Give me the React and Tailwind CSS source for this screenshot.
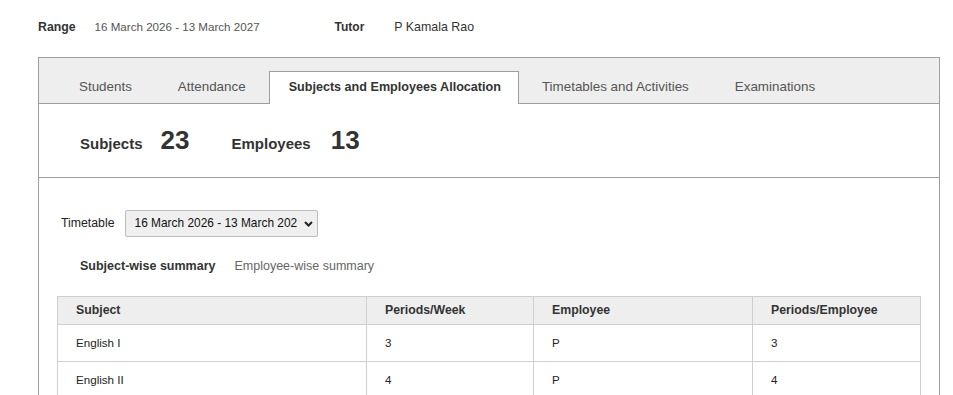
const tabs = [
  'Students',
  'Attendance',
  'Subjects and Employees Allocation',
  'Timetables and Activities',
  'Examinations',
];

const rows = [
  { subject: 'English I', periods: 3, employee: 'P', perEmployee: 3 },
  { subject: 'English II', periods: 4, employee: 'P', perEmployee: 4 },
];

function App() {
  const active = 2;

  return (
    <div className="min-h-screen bg-white pl-[38px] pt-[18px] [font-family:'Liberation_Sans',Arial,sans-serif] text-[#333]">
      <div className="flex items-center h-[18px]">
        <span className="text-[12.3px] font-bold text-[#333]">Range</span>
        <span className="ml-[19px] text-[11.6px] text-[#555]">16 March 2026 - 13 March 2027</span>
        <span className="ml-[75px] text-[12px] font-bold text-[#333]">Tutor</span>
        <span className="ml-[30px] text-[12.4px] text-[#333]">P Kamala Rao</span>
      </div>

      <div className="mt-[21px] w-[902px] border border-[#9e9e9e]">
        <div className="flex items-end bg-[#eee] pt-[13px] pl-[17px] border-b border-[#9e9e9e]">
          {tabs.map((tab, i) => (
            <div
              key={tab}
              className={`h-[33px] -mb-px pb-[2px] flex items-center border-t border-l border-r ${
                i === active
                  ? 'bg-white border-[#9e9e9e] font-bold text-[12.6px] text-[#333] pl-[19px] pr-[17px]'
                  : 'border-transparent text-[13.4px] text-[#555] px-[22px]'
              }`}
            >
              {tab}
            </div>
          ))}
        </div>

        <div className="h-[74px] flex items-center pl-[41px] border-b border-[#9e9e9e]">
          <div className="flex items-baseline">
            <span className="text-[15px] font-bold text-[#333]">Subjects</span>
            <span className="ml-[18px] text-[26px] font-bold text-[#333]">23</span>
            <span className="ml-[42px] text-[15px] font-bold text-[#333]">Employees</span>
            <span className="ml-[20px] text-[26px] font-bold text-[#333]">13</span>
          </div>
        </div>

        <div className="pt-[32px] pb-6">
          <div className="flex items-center pl-[22px]">
            <span className="text-[12.3px] text-[#222]">Timetable</span>
            <div className="ml-[10px] w-[193px] h-[27px] flex items-center bg-[#efefef] border border-[#bdbdbd] rounded-[2px] pl-[9px]">
              <span className="w-[164px] overflow-hidden whitespace-nowrap text-[11.9px] text-[#111]">
                16 March 2026 - 13 March 202
              </span>
              <svg width="9" height="6" viewBox="0 0 9 6" className="ml-[5px] shrink-0">
                <polyline points="1,1 4.5,4.5 8,1" fill="none" stroke="#222" strokeWidth="2" />
              </svg>
            </div>
          </div>

          <div className="flex items-center pl-[41px] mt-[21px] h-[16px]">
            <span className="text-[12.5px] font-bold text-[#333]">Subject-wise summary</span>
            <span className="ml-[19px] text-[12.5px] text-[#666]">Employee-wise summary</span>
          </div>

          <table className="ml-[18px] mt-[22px] border-collapse table-fixed w-[863px]">
            <colgroup>
              <col className="w-[309px]" />
              <col className="w-[167px]" />
              <col className="w-[219px]" />
              <col className="w-[168px]" />
            </colgroup>
            <thead>
              <tr className="bg-[#eee]">
                {['Subject', 'Periods/Week', 'Employee', 'Periods/Employee'].map((h) => (
                  <th
                    key={h}
                    className="h-[28px] border border-[#cfcfcf] text-left pl-[18px] text-[12.3px] font-bold text-[#333]"
                  >
                    {h}
                  </th>
                ))}
              </tr>
            </thead>
            <tbody>
              {rows.map((r) => (
                <tr key={r.subject}>
                  <td className="h-[37px] border border-[#cfcfcf] pl-[18px] text-[11.6px] text-[#222]">{r.subject}</td>
                  <td className="border border-[#cfcfcf] pl-[18px] text-[11.6px] text-[#222]">{r.periods}</td>
                  <td className="border border-[#cfcfcf] pl-[18px] text-[11.6px] text-[#222]">{r.employee}</td>
                  <td className="border border-[#cfcfcf] pl-[18px] text-[11.6px] text-[#222]">{r.perEmployee}</td>
                </tr>
              ))}
            </tbody>
          </table>
        </div>
      </div>
    </div>
  );
}

export default App;
